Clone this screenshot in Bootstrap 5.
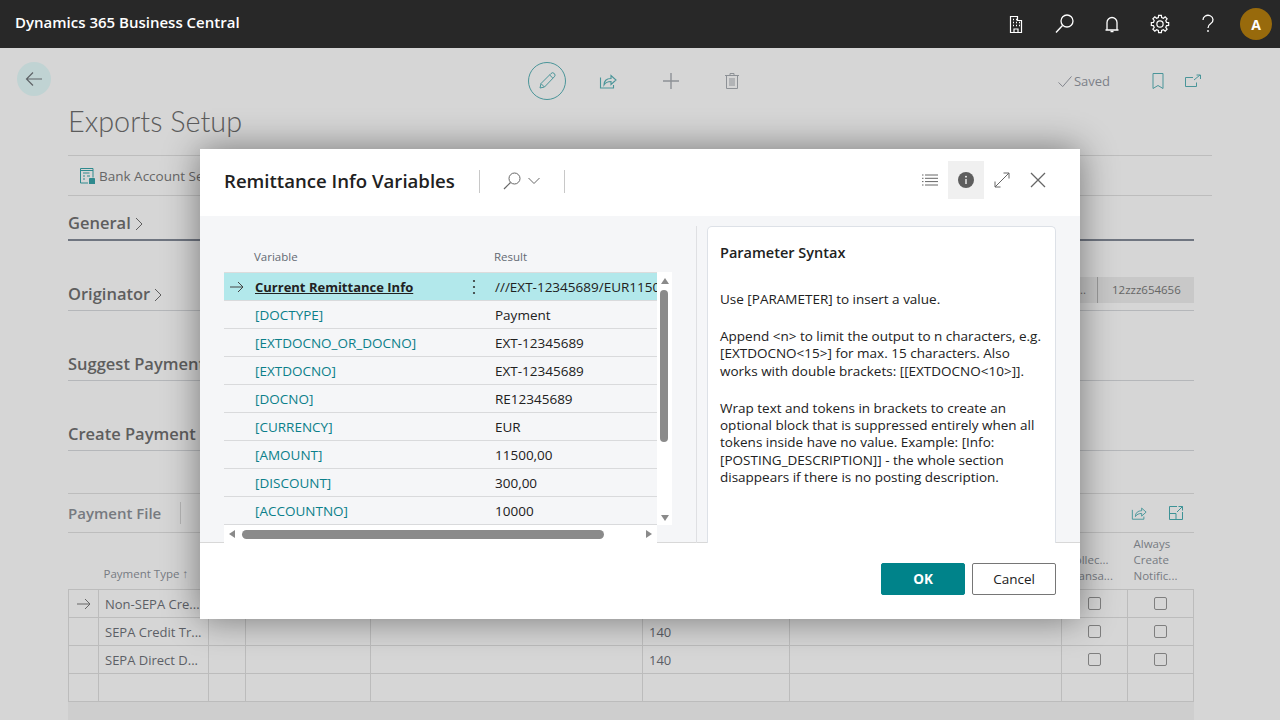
<!DOCTYPE html>
<html lang="en">
  <head>
    <meta charset="UTF-8" />
    <meta name="viewport" content="width=device-width, initial-scale=1.0" />
    <title>Exports Setup</title>
    <link
      rel="stylesheet"
      href="https://cdn.jsdelivr.net/npm/bootstrap@5.3.0/dist/css/bootstrap.min.css"
    />
    <style>
      html,
      body {
        height: 720px;
        overflow: hidden;
      }
      body {
        background-color: #d6d6d6;
        font-family: "Open Sans", "Noto Sans", sans-serif;
        font-size: 13.5px;
        color: #212121;
        position: relative;
      }
      svg {
        display: block;
        fill: none;
        stroke: currentColor;
        stroke-width: 1;
      }

      /* top bar */
      .app-bar {
        height: 48px;
        background-color: #282828;
        color: #fff;
        padding: 0 8px 0 15px;
      }
      .app-name {
        font-size: 15px;
        font-weight: 600;
        padding-bottom: 3px;
      }
      .app-icons {
        gap: 24px;
        margin-right: 20px;
      }
      .app-icons svg {
        width: 24px;
        height: 24px;
      }
      .avatar {
        width: 32px;
        height: 32px;
        border-radius: 50%;
        background-color: #986a0c;
        font-size: 14px;
        font-weight: 700;
      }

      /* dimmed page underneath */
      .page-tools {
        height: 54px;
        padding: 14px 0 0 17px;
        display: grid;
        grid-template-columns: 511px 1fr auto;
        align-items: start;
      }
      .back-btn {
        width: 34px;
        height: 34px;
        border-radius: 50%;
        background-color: #c0d3d3;
        color: #5f6468;
      }
      .edit-btn {
        width: 38px;
        height: 38px;
        border-radius: 50%;
        border: 1px solid #4a9599;
        color: #4a9599;
      }
      .mid-tools {
        color: #4a9599;
        height: 38px;
      }
      .mid-tools .grey-icon {
        color: #8d9196;
      }
      .tool-share {
        margin-left: 33px;
      }
      .tool-plus {
        margin-left: 45px;
      }
      .tool-trash {
        margin-left: 44px;
      }
      .right-tools {
        color: #4a9599;
        padding: 0 78px 0 0;
        height: 38px;
      }
      .saved-text {
        color: #7c8088;
        font-size: 13px;
        padding-top: 1px;
      }
      .saved-check {
        margin-right: 1px;
      }
      .tool-bookmark {
        margin-left: 41px;
      }
      .tool-open {
        margin-left: 19px;
      }
      .page-body {
        padding-left: 68px;
        width: 1212px;
      }
      .page-title {
        font-family: "Lato", "Open Sans", sans-serif;
        font-size: 28.800px;
        font-weight: 300;
        color: #5c5c5c;
        line-height: 39px;
        margin: 0;
        height: 53px;
      }
      .action-strip {
        height: 41px;
        border-top: 1px solid #bdbdbd;
        border-bottom: 1px solid #bdbdbd;
        padding-left: 11px;
        padding-top: 1px;
        color: #666;
        font-size: 13.5px;
      }
      .action-strip svg {
        color: #2f8a8e;
      }
      .fast-tab {
        width: 1126px;
        height: 70px;
        padding-bottom: 3px;
        border-bottom: 1px solid #b5b7ba;
        font-size: 16.500px;
        font-weight: 600;
        color: #5e5e5e;
      }
      .fast-first {
        height: 45px;
        border-bottom: 2px solid #6f7580;
      }
      .fast-chevron {
        margin: 0 0 5px 4px;
      }
      .field-box {
        width: 114px;
        height: 26px;
        background-color: #c8c8c8;
        font-size: 11.500px;
        font-weight: 400;
        color: #666;
        margin-bottom: 4px;
        line-height: 26px;
      }
      .field-more {
        width: 17px;
      }
      .field-value {
        border-left: 1px solid #9a9a9a;
        padding-left: 14px;
      }
      .lines-bar {
        width: 1126px;
        height: 40px;
        margin-top: 42px;
        border-top: 1px solid #bdbdbd;
        border-bottom: 1px solid #bdbdbd;
        color: #767a80;
        font-size: 15px;
        font-weight: 600;
      }
      .lines-sep {
        width: 1px;
        height: 22px;
        background-color: #b5b5b5;
        margin-left: 19px;
      }
      .lines-icons {
        color: #3d9296;
        gap: 21px;
        margin-right: 10px;
      }
      table.lines-table {
        width: 1126px;
        table-layout: fixed;
        margin: 0;
        border-collapse: collapse;
        --bs-table-bg: transparent;
        color: #5c5f66;
      }
      .lines-table th {
        height: 56px;
        font-size: 11.500px;
        font-weight: 400;
        color: #777b82;
        vertical-align: bottom;
        padding: 0 0 5px 6px;
        line-height: 16px;
        border: 0;
        border-bottom: 1px solid #bcbcbc;
        white-space: nowrap;
      }
      .lines-table th.sort-head {
        padding: 0 0 7px 5px;
      }
      .lines-table td {
        height: 28px;
        padding: 3px 6px 0;
        border: 1px solid #bcbcbc;
        vertical-align: middle;
        white-space: nowrap;
        overflow: hidden;
        font-size: 13px;
      }
      .lines-table td.tick {
        padding: 1px 0 0;
      }
      .tick-box {
        width: 13px;
        height: 13px;
        border: 1px solid #7f7f7f;
        border-radius: 2px;
        margin: 0 auto;
      }
      .row-arrow {
        color: #666;
        margin: 0 auto;
      }
      .foot-band {
        width: 1126px;
        height: 19px;
        background-color: #cecece;
      }

      /* dialog */
      .dlg-wrap {
        position: absolute;
        top: 48px;
        left: 0;
        right: 0;
        bottom: 0;
      }
      .dlg-box {
        width: 880px;
        height: 470px;
        background-color: #fff;
        box-shadow: 0 0 34px rgba(0, 0, 0, 0.45);
      }
      .dlg-head {
        height: 67px;
        padding-left: 24px;
        padding-bottom: 3px;
      }
      .dlg-title {
        font-size: 18.600px;
        font-weight: 600;
        margin: 0;
        line-height: 1;
        color: #212121;
        width: 255px;
      }
      .head-sep {
        width: 1px;
        height: 23px;
        background-color: #c8c8c8;
      }
      .dlg-search {
        width: 84px;
        color: #666;
        padding-left: 22px;
        gap: 6px;
      }
      .head-btns {
        margin-left: auto;
        margin-right: 24px;
        margin-bottom: 2px;
        color: #666;
      }
      .head-btn {
        width: 36px;
        height: 38px;
      }
      .head-btn-on {
        background-color: #f0f0f0;
      }
      .dlg-main {
        height: 327px;
        background-color: #f5f6f8;
        border-bottom: 1px solid #d8d8d8;
        padding-left: 24px;
      }
      .list-pane {
        width: 448px;
        padding-top: 32px;
      }
      .vars-grid {
        width: 433px;
        height: 277px;
        overflow: hidden;
      }
      .vars-table {
        width: 433px;
        table-layout: fixed;
        margin: 0;
        --bs-table-bg: transparent;
        border-collapse: collapse;
      }
      .vars-table th {
        height: 24px;
        font-size: 11.500px;
        font-weight: 400;
        color: #646a73;
        padding: 0 0 7px 5px;
        vertical-align: middle;
        border: 0;
        border-bottom: 1px solid #dcdcdc;
      }
      .vars-table td {
        height: 28px;
        padding: 1px 0 0 6px;
        vertical-align: middle;
        white-space: nowrap;
        overflow: hidden;
        color: #212121;
        border: 0;
        border-bottom: 1px solid #d9dadc;
        font-size: 13.500px;
      }
      .vars-table td a {
        color: #0b7f8a;
        text-decoration: none;
      }
      .vars-table .row-on td {
        background-color: #b2e8eb;
        color: #212121;
      }
      .vars-table .row-on td a {
        color: #212121;
        font-size: 13px;
        font-weight: 700;
        text-decoration: underline;
      }
      .vars-table td.arrow-cell {
        padding: 0 0 0 6px;
        color: #444;
      }
      .kebab-dots {
        margin-left: 7px;
        color: #333;
      }
      .vbar {
        width: 15px;
        height: 253px;
        margin-top: 24px;
        background-color: #fff;
      }
      .tri-top {
        margin-top: 6px;
      }
      .tri-bottom {
        margin-bottom: 4px;
      }
      .vbar-thumb {
        width: 8px;
        height: 152px;
        background-color: #8a8a8a;
        border-radius: 4px;
        margin: 6px 1px auto 0;
      }
      .hbar {
        width: 433px;
        height: 18px;
        background-color: #fff;
        color: #8a8a8a;
        padding: 0 5px;
      }
      .hbar-thumb {
        width: 362px;
        height: 9px;
        border-radius: 5px;
        background-color: #8a8a8a;
        margin-left: 7px;
      }
      .tri-u,
      .tri-d,
      .tri-l,
      .tri-r {
        width: 0;
        height: 0;
        border: 4px solid transparent;
      }
      .tri-u {
        border-bottom: 6px solid #8a8a8a;
        border-top: 0;
      }
      .tri-d {
        border-top: 6px solid #8a8a8a;
        border-bottom: 0;
      }
      .tri-l {
        border-right: 6px solid #8a8a8a;
        border-left: 0;
      }
      .tri-r {
        border-left: 6px solid #8a8a8a;
        border-right: 0;
      }
      .pane-sep {
        width: 1px;
        height: 317px;
        margin-top: 10px;
        margin-left: 24px;
        background-color: #dfe0e3;
      }
      .info-pane {
        width: 349px;
        height: 317px;
        margin-top: 10px;
        margin-left: 10px;
        background-color: #fff;
        border: 1px solid #dde1e7;
        border-bottom: 0;
        border-radius: 5px 5px 0 0;
        padding: 17px 12px 0;
        line-height: 17.400px;
      }
      .info-title {
        font-size: 14.500px;
        font-weight: 600;
        margin: 0 0 29px;
        line-height: 18px;
      }
      .info-pane p {
        margin: 0 0 19.500px;
        white-space: nowrap;
      }
      .dlg-foot {
        height: 75px;
        padding: 20px 24px 0 0;
        gap: 7px;
      }
      .foot-btn {
        width: 84px;
        height: 32px;
        border-radius: 2px;
        font-size: 13.500px;
        padding: 0;
      }
      .btn-ok {
        background-color: #00838a;
        border-color: #00838a;
        color: #fff;
        font-weight: 700;
      }
      .btn-cancel {
        background-color: #fff;
        border-color: #767676;
        color: #212121;
        font-weight: 500;
      }
    </style>
  </head>
  <body>
    <nav class="app-bar d-flex align-items-center">
      <span class="app-name">Dynamics 365 Business Central</span>
      <div class="app-icons d-flex align-items-center ms-auto">
        <svg viewBox="0 0 24 24">
          <path d="M6.500 20.500V4.500h7v4h4v12z" stroke-width="1.200" />
          <path d="M9 7.500h1M12 7.500h1M9 10.500h1M12 10.500h1M15 10.500h1M9 13.500h1M12 13.500h1M15 13.500h1" stroke-width="1.300" />
          <path d="M10 20.500v-3.500h4v3.500" stroke-width="1.200" />
        </svg>
        <svg viewBox="0 0 24 24">
          <circle cx="15" cy="9" r="6" stroke-width="1.300" />
          <path d="M10.500 13.500 4 20.500" stroke-width="1.400" />
        </svg>
        <svg viewBox="0 0 24 24">
          <path d="M7 18V10.500a5 5 0 0 1 10 0V18M5.500 18h13" stroke-width="1.300" />
          <path d="M10.500 19.500h3" stroke-width="1.500" />
        </svg>
        <svg viewBox="-1 -1 26 26">
          <circle cx="12" cy="12" r="3.400" stroke-width="1.300" />
          <path
            stroke-width="1.300"
            d="M10.230 4.920 10.510 2.620H13.490L13.770 4.920 15.750 5.740 17.580 4.310 19.690 6.420 18.260 8.250 19.080 10.230 21.380 10.510V13.490L19.080 13.770 18.260 15.750 19.690 17.580 17.580 19.690 15.750 18.260 13.770 19.080 13.490 21.380H10.510L10.230 19.080 8.250 18.260 6.420 19.690 4.310 17.580 5.740 15.750 4.920 13.770 2.620 13.490V10.510L4.920 10.230 5.740 8.250 4.310 6.420 6.420 4.310 8.250 5.740z"
          />
        </svg>
        <svg viewBox="0 0 24 24">
          <path d="M7 8a5 4.500 0 1 1 7.800 3.500c-2 1.300-2.800 2-2.800 4.500" stroke-width="1.300" />
          <circle cx="12" cy="19" r=".9" fill="currentColor" stroke="none" />
        </svg>
      </div>
      <div class="avatar d-flex align-items-center justify-content-center">A</div>
    </nav>

    <div class="page-tools">
      <div class="back-btn d-flex align-items-center justify-content-center">
        <svg width="18" height="16" viewBox="0 0 18 16">
          <path d="M17 8H1.500M8 1.500 1.500 8 8 14.500" stroke-width="1.200" />
        </svg>
      </div>
      <div class="mid-tools d-flex align-items-center">
        <div class="edit-btn d-flex align-items-center justify-content-center">
          <svg width="20" height="20" viewBox="0 0 20 20">
            <path d="M3 17l1-4.500L14 2.500a1.900 1.900 0 0 1 3.300 3.300L7.500 16zM12.700 4l3.200 3.200M4.100 12.700l3.200 3.200" />
          </svg>
        </div>
        <svg class="tool-share" width="18" height="18" viewBox="0 0 18 18">
          <path d="M1.500 5.500v10.500h13v-3" stroke-width="1.100" />
          <path d="M5 13c0-4.500 3-6.500 7-6.500V3.500l5 4.500-5 4.500V9.500c-3 0-5.500 1-7 3.500z" stroke-width="1.100" />
        </svg>
        <svg class="grey-icon tool-plus" width="18" height="18" viewBox="0 0 18 18">
          <path d="M9 1v16M1 9h16" stroke-width="1.400" />
        </svg>
        <svg class="grey-icon tool-trash" width="16" height="18" viewBox="0 0 16 18">
          <path d="M1 3.500h14M6 3.500V1.500h4v2M2.500 3.500V16.500h11V3.500M6 6v8M8 6v8M10 6v8" />
        </svg>
      </div>
      <div class="right-tools d-flex align-items-center">
        <svg class="saved-text saved-check" width="16" height="14" viewBox="0 0 16 14">
          <path d="M1 8l4.500 4.500L15 1.500" />
        </svg>
        <span class="saved-text">Saved</span>
        <svg class="tool-bookmark" width="14" height="18" viewBox="0 0 14 18">
          <path d="M2 1.500h10v15L7 13.500 2 16.500z" />
        </svg>
        <svg class="tool-open" width="18" height="14" viewBox="0 0 18 14">
          <path d="M9 3.500H1.500v9h11v-4M10 6l6-5M12.500 1H16.500v4" />
        </svg>
      </div>
    </div>

    <div class="page-body">
      <h1 class="page-title">Exports Setup</h1>
      <div class="action-strip d-flex align-items-center gap-1">
        <svg width="16" height="16" viewBox="0 0 16 16">
          <path d="M1.500 .5h12.500v9M1.500 .5V15H9M1 2.500h13M4 5h6.500M4 8h2M8 8h3M4 11h2" />
          <path d="M10.500 10.500h5V16h-5z" fill="currentColor" />
        </svg>
        <span>Bank Account Setup</span>
      </div>
      <div class="fast-tab fast-first d-flex align-items-end">
        <span>General</span>
        <svg class="fast-chevron" width="8" height="14" viewBox="0 0 8 14"><path d="M1 1l6 6-6 6" /></svg>
      </div>
      <div class="fast-tab d-flex align-items-end">
        <span>Originator</span>
        <svg class="fast-chevron" width="8" height="14" viewBox="0 0 8 14"><path d="M1 1l6 6-6 6" /></svg>
        <div class="field-box d-flex ms-auto">
          <span class="field-more">..</span><span class="field-value">12zzz654656</span>
        </div>
      </div>
      <div class="fast-tab d-flex align-items-end"><span>Suggest Payment</span></div>
      <div class="fast-tab d-flex align-items-end"><span>Create Payment</span></div>

      <div class="lines-bar d-flex align-items-center">
        <span>Payment File</span>
        <span class="lines-sep"></span>
        <div class="lines-icons d-flex align-items-center ms-auto">
          <svg width="16" height="16" viewBox="0 0 18 18">
            <path d="M1.500 5.500v10.500h13v-3" />
            <path d="M5 13c0-4.500 3-6.500 7-6.500V3.500l5 4.500-5 4.500V9.500c-3 0-5.500 1-7 3.500z" />
          </svg>
          <svg width="16" height="16" viewBox="0 0 16 16">
            <path d="M9 1.500H1.500v13h13V7M1.500 8.500H8v6M9 7l5.500-5.500M10.500 1.500h4v4" />
          </svg>
        </div>
      </div>
      <table class="table lines-table">
        <colgroup>
          <col width="30" /><col width="110" /><col width="37" /><col width="125" /><col width="272" />
          <col width="147" /><col width="272" /><col width="66" /><col width="66" />
        </colgroup>
        <thead>
          <tr>
            <th></th>
            <th class="sort-head">Payment Type ↑</th>
            <th></th><th></th><th></th><th></th><th></th>
            <th>Collec...<br />Transa...</th>
            <th>Always<br />Create<br />Notific...</th>
          </tr>
        </thead>
        <tbody>
          <tr>
            <td class="tick">
              <svg class="row-arrow" width="14" height="12" viewBox="0 0 14 12"><path d="M0 6h13M8 1l5 5-5 5" /></svg>
            </td>
            <td>Non-SEPA Cre...</td><td></td><td></td><td></td><td></td><td></td>
            <td class="tick"><div class="tick-box"></div></td>
            <td class="tick"><div class="tick-box"></div></td>
          </tr>
          <tr>
            <td></td><td>SEPA Credit Tr...</td><td></td><td></td><td></td><td>140</td><td></td>
            <td class="tick"><div class="tick-box"></div></td>
            <td class="tick"><div class="tick-box"></div></td>
          </tr>
          <tr>
            <td></td><td>SEPA Direct D...</td><td></td><td></td><td></td><td>140</td><td></td>
            <td class="tick"><div class="tick-box"></div></td>
            <td class="tick"><div class="tick-box"></div></td>
          </tr>
          <tr>
            <td></td><td></td><td></td><td></td><td></td><td></td><td></td><td></td><td></td>
          </tr>
        </tbody>
      </table>
      <div class="foot-band"></div>
    </div>

    <div class="dlg-wrap d-flex align-items-center justify-content-center">
      <div class="dlg-box d-flex flex-column">
        <div class="dlg-head d-flex align-items-center">
          <h2 class="dlg-title">Remittance Info Variables</h2>
          <span class="head-sep"></span>
          <div class="dlg-search d-flex align-items-center">
            <svg width="20" height="20" viewBox="0 0 20 20">
              <circle cx="12.500" cy="7.500" r="5.500" />
              <path d="M8.500 11.500 2 18" stroke-width="1.200" />
            </svg>
            <svg width="12" height="8" viewBox="0 0 12 8"><path d="M.5 1 6 6.500 11.500 1" /></svg>
          </div>
          <span class="head-sep"></span>
          <div class="head-btns d-flex align-items-center">
            <div class="head-btn d-flex align-items-center justify-content-center">
              <svg width="16" height="12" viewBox="0 0 16 12">
                <path d="M0 1h1.500M3 1h13M0 4.300h1.500M3 4.300h13M0 7.600h1.500M3 7.600h13M0 11h1.500M3 11h13" />
              </svg>
            </div>
            <div class="head-btn head-btn-on d-flex align-items-center justify-content-center">
              <svg width="16" height="16" viewBox="0 0 16 16">
                <circle cx="8" cy="8" r="8" fill="#5e5e5e" stroke="none" />
                <path d="M8 7v5" stroke="#fff" stroke-width="1.300" />
                <circle cx="8" cy="4.700" r=".9" fill="#fff" stroke="none" />
              </svg>
            </div>
            <div class="head-btn d-flex align-items-center justify-content-center">
              <svg width="16" height="16" viewBox="0 0 16 16">
                <path d="M1 15 15 1M9.500 1H15v5.500M1 9.500V15h5.500" />
              </svg>
            </div>
            <div class="head-btn d-flex align-items-center justify-content-center">
              <svg width="16" height="16" viewBox="0 0 16 16">
                <path d="M1 1l14 14M15 1 1 15" stroke-width="1.300" />
              </svg>
            </div>
          </div>
        </div>

        <div class="dlg-main d-flex">
          <div class="list-pane">
            <div class="d-flex">
              <div class="vars-grid">
                <table class="table vars-table">
                  <colgroup>
                    <col width="25" /><col width="210" /><col width="30" /><col width="168" />
                  </colgroup>
                  <thead>
                    <tr><th></th><th>Variable</th><th></th><th>Result</th></tr>
                  </thead>
                  <tbody>
                    <tr class="row-on">
                      <td class="arrow-cell">
                        <svg width="14" height="12" viewBox="0 0 14 12"><path d="M0 6h13M8 1l5 5-5 5" /></svg>
                      </td>
                      <td><a href="#">Current Remittance Info</a></td>
                      <td>
                        <svg class="kebab-dots" width="4" height="16" viewBox="0 0 4 16">
                          <circle cx="2" cy="2" r="1.100" fill="currentColor" stroke="none" />
                          <circle cx="2" cy="8" r="1.100" fill="currentColor" stroke="none" />
                          <circle cx="2" cy="14" r="1.100" fill="currentColor" stroke="none" />
                        </svg>
                      </td>
                      <td>///EXT-12345689/EUR11500</td>
                    </tr>
                    <tr><td></td><td><a href="#">[DOCTYPE]</a></td><td></td><td>Payment</td></tr>
                    <tr><td></td><td><a href="#">[EXTDOCNO_OR_DOCNO]</a></td><td></td><td>EXT-12345689</td></tr>
                    <tr><td></td><td><a href="#">[EXTDOCNO]</a></td><td></td><td>EXT-12345689</td></tr>
                    <tr><td></td><td><a href="#">[DOCNO]</a></td><td></td><td>RE12345689</td></tr>
                    <tr><td></td><td><a href="#">[CURRENCY]</a></td><td></td><td>EUR</td></tr>
                    <tr><td></td><td><a href="#">[AMOUNT]</a></td><td></td><td>11500,00</td></tr>
                    <tr><td></td><td><a href="#">[DISCOUNT]</a></td><td></td><td>300,00</td></tr>
                    <tr><td></td><td><a href="#">[ACCOUNTNO]</a></td><td></td><td>10000</td></tr>
                  </tbody>
                </table>
              </div>
              <div class="vbar d-flex flex-column align-items-center">
                <span class="tri-u tri-top"></span>
                <div class="vbar-thumb"></div>
                <span class="tri-d tri-bottom"></span>
              </div>
            </div>
            <div class="hbar d-flex align-items-center">
              <span class="tri-l"></span>
              <div class="hbar-thumb"></div>
              <span class="tri-r ms-auto"></span>
            </div>
          </div>
          <div class="pane-sep"></div>
          <div class="info-pane">
            <h3 class="info-title">Parameter Syntax</h3>
            <p>Use [PARAMETER] to insert a value.</p>
            <p>
              Append &lt;n&gt; to limit the output to n characters, e.g.<br />
              [EXTDOCNO&lt;15&gt;] for max. 15 characters. Also<br />
              works with double brackets: [[EXTDOCNO&lt;10&gt;]].
            </p>
            <p>
              Wrap text and tokens in brackets to create an<br />
              optional block that is suppressed entirely when all<br />
              tokens inside have no value. Example: [Info:<br />
              [POSTING_DESCRIPTION]] - the whole section<br />
              disappears if there is no posting description.
            </p>
          </div>
        </div>

        <div class="dlg-foot d-flex justify-content-end">
          <button type="button" class="btn foot-btn btn-ok">OK</button>
          <button type="button" class="btn foot-btn btn-cancel">Cancel</button>
        </div>
      </div>
    </div>

    <script src="https://cdn.jsdelivr.net/npm/bootstrap@5.3.0/dist/js/bootstrap.bundle.min.js"></script>
  </body>
</html>
